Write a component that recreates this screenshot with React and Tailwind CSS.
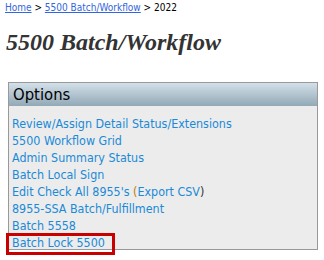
const links = [
  { label: 'Review/Assign Detail Status/Extensions' },
  { label: '5500 Workflow Grid' },
  { label: 'Admin Summary Status' },
  { label: 'Batch Local Sign' },
  { label: "Edit Check All 8955's", extra: 'Export CSV' },
  { label: '8955-SSA Batch/Fulfillment' },
  { label: 'Batch 5558' },
  { label: 'Batch Lock 5500', boxed: true },
];

export default function App() {
  return (
    <div className="w-[324px] h-[260px] bg-white overflow-hidden font-['DejaVu_Sans',sans-serif]">
      {/* breadcrumb */}
      <div className="pl-[5px] pt-[1px] text-[10px] leading-[13px] text-black font-['DejaVu_Sans_Condensed','DejaVu_Sans',sans-serif]">
        <a href="#" className="text-[#3366dd] underline">Home</a>
        <span> &gt; </span>
        <a href="#" className="text-[#3366dd] underline">5500 Batch/Workflow</a>
        <span> &gt; 2022</span>
      </div>

      <h1 className="pl-[6px] mt-[14px] text-[24px] leading-[28px] font-bold italic text-[#333] font-['Liberation_Serif',serif]">
        5500 Batch/Workflow
      </h1>

      {/* options panel */}
      <div className="ml-[8px] mt-[26px] w-[310px] h-[168px] border border-[#999] bg-[#ececec]">
        <div className="h-[23px] bg-gradient-to-b from-[#d3e0e9] to-[#92a9b6] pl-[4px] text-[16.5px] leading-[23px] text-black font-['DejaVu_Sans_Condensed','DejaVu_Sans',sans-serif]">
          Options
        </div>
        <div className="pt-[9px] pl-[3px] flex flex-col font-['DejaVu_Sans_Condensed','DejaVu_Sans',sans-serif] text-[12.4px] leading-[17px] text-[#1a8ad8]">
          {links.map((l, i) => (
            <div key={i} className="h-[17px]">
              <span className={l.boxed ? 'inline-block -ml-[6px] -mt-[3px] pl-[3px] pr-[7px] pb-[2px] border-[3px] border-[#c80000] leading-[14px]' : ''}>
                <a href="#" className="no-underline">{l.label}</a>
              </span>
              {l.extra && (
                <span className="text-[#1a8ad8]"> <span className="text-[#c08000]">(</span><a href="#">{l.extra}</a><span className="text-[#333]">)</span></span>
              )}
            </div>
          ))}
        </div>
      </div>
    </div>
  );
}
